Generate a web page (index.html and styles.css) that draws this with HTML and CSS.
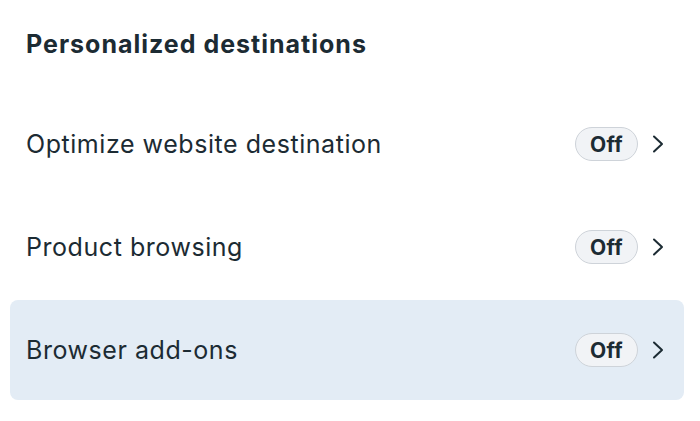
FILE: index.html
```html
<!DOCTYPE html>
<html lang="en">
<head>
<meta charset="utf-8">
<link rel="stylesheet" href="styles.css">
</head>
<body>
<div class="panel">
  <h2 class="title">Personalized destinations</h2>
  <ul class="list">
    <li class="row">
      <span class="label">Optimize website destination</span>
      <span class="meta"><span class="pill">Off</span><svg class="chev" width="12" height="20" viewBox="0 0 12 20"><path d="M2 2.5 L10 10 L2 17.5" fill="none" stroke="#1c2b33" stroke-width="2" stroke-linecap="round" stroke-linejoin="round"/></svg></span>
    </li>
    <li class="row">
      <span class="label">Product browsing</span>
      <span class="meta"><span class="pill">Off</span><svg class="chev" width="12" height="20" viewBox="0 0 12 20"><path d="M2 2.5 L10 10 L2 17.5" fill="none" stroke="#1c2b33" stroke-width="2" stroke-linecap="round" stroke-linejoin="round"/></svg></span>
    </li>
    <li class="row active">
      <span class="label">Browser add-ons</span>
      <span class="meta"><span class="pill">Off</span><svg class="chev" width="12" height="20" viewBox="0 0 12 20"><path d="M2 2.5 L10 10 L2 17.5" fill="none" stroke="#1c2b33" stroke-width="2" stroke-linecap="round" stroke-linejoin="round"/></svg></span>
    </li>
  </ul>
</div>
</body>
</html>
```
FILE: styles.css
```css
html, body {
  margin: 0;
  padding: 0;
  background: #ffffff;
}
body {
  font-family: Inter, "Noto Sans", sans-serif;
  color: #1c2b33;
}
.panel {
  padding: 0 16px 0 10px;
}
.title {
  margin: 0;
  padding: 28px 0 0 16px;
  height: 64px;
  box-sizing: border-box;
  font-size: 25px;
  font-weight: 700;
  letter-spacing: 1px;
  line-height: 32px;
}
.list {
  list-style: none;
  margin: 30px 0 0 0;
  padding: 0;
  display: flex;
  flex-direction: column;
  gap: 3px;
}
.row {
  height: 100px;
  display: flex;
  align-items: center;
  justify-content: space-between;
  padding: 0 20px 0 16px;
  border-radius: 8px;
}
.row.active {
  background: #e3ecf5;
}
.label {
  font-size: 25px;
  font-weight: 400;
  letter-spacing: 0.55px;
}
.meta {
  display: flex;
  align-items: center;
  gap: 14px;
}
.pill {
  display: inline-flex;
  align-items: center;
  justify-content: center;
  width: 63px;
  height: 34px;
  box-sizing: border-box;
  border: 1.5px solid #ced3d9;
  border-radius: 17px;
  background: #f1f3f6;
  font-size: 21px;
  font-weight: 700;
  letter-spacing: 0.3px;
}
.chev {
  display: block;
}
```
